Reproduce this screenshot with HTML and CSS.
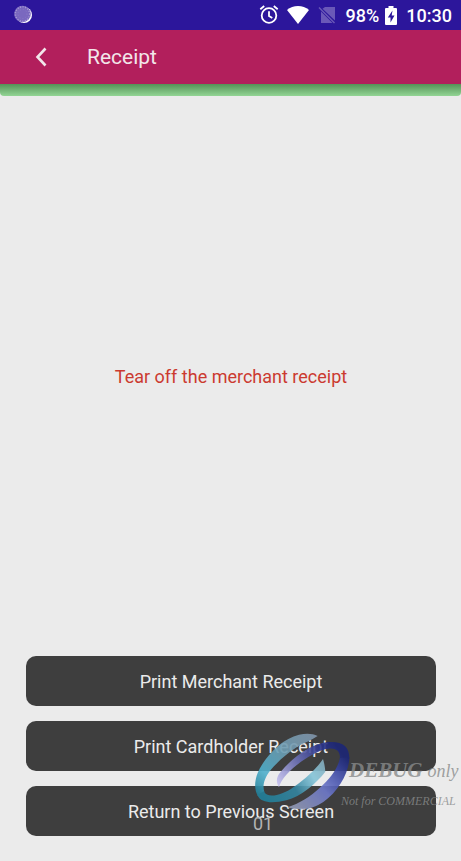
FILE: index.html
```
<!DOCTYPE html>
<html lang="en">
<head>
    <meta charset="UTF-8">
    <meta name="viewport" content="width=device-width, initial-scale=1.0">
    <title>Receipt</title>
    <link rel="stylesheet" href="styles.css">
</head>
<body>
    <div class="status-bar">
        <svg class="status-spinner" width="20" height="20" viewBox="0 0 20 20">
            <circle cx="10" cy="10" r="8" fill="#fff"/>
            <circle cx="8.5" cy="9" r="8.3" fill="#7a68bf"/>
            <circle cx="8.5" cy="9" r="7.2" fill="none" stroke="#a99cd6" stroke-width="1.5" stroke-dasharray="1 1.6"/>
            <circle cx="8.5" cy="9" r="4.5" fill="none" stroke="#8b7bc8" stroke-width="1" stroke-dasharray="1 2"/>
        </svg>
        <div class="status-icons">
            <svg width="20" height="20" viewBox="0 0 20 20" fill="none" stroke="#fff" stroke-width="1.8">
                <circle cx="10" cy="10.5" r="7.3"/>
                <path d="M10 6.3v4.7l3.3 2"/>
                <path d="M1.3 4.3l3.9-3.3M18.7 4.3l-3.9-3.3"/>
            </svg>
            <svg class="wifi" width="22" height="18" viewBox="0 0 22 18">
                <path d="M0 4C6-1.2 16-1.2 22 4L11 18z" fill="#fff"/>
            </svg>
            <svg class="no-sim" width="18" height="18" viewBox="0 0 18 18">
                <path d="M7 1h10v13.5L4.500 2.800zM3 5.500L14.500 17H3z" fill="#6a58b8"/>
                <path d="M1 1.500L16.500 17" stroke="#6a58b8" stroke-width="1.4"/>
            </svg>
            <span>98%</span>
            <svg class="battery" width="12" height="19" viewBox="0 0 12 19">
                <path d="M3.5 0h5v2H11q1 0 1 1v15q0 1-1 1H1q-1 0-1-1V3q0-1 1-1h2.5z" fill="#fff"/>
                <path d="M7.5 4.5L2.8 11.5h2.7V16.500L9.500 9.500H6.700z" fill="#2c169b"/>
            </svg>
            <span>10:30</span>
        </div>
    </div>

    <header class="toolbar">
        <button class="back" type="button" aria-label="Back">
            <svg width="12" height="20" viewBox="0 0 12 20">
                <path d="M10.500 1.500L2.500 10L10.500 18.500" fill="none" stroke="#f2e6ea" stroke-width="2.6"/>
            </svg>
        </button>
        <h1>Receipt</h1>
    </header>
    <div class="strip"></div>

    <main>
        <p class="message">Tear off the merchant receipt</p>
        <div class="actions">
            <button type="button">Print Merchant Receipt</button>
            <button type="button">Print Cardholder Receipt</button>
            <button type="button">Return to Previous Screen</button>
        </div>
    </main>

    <!-- debug build overlay -->
    <div class="watermark">
        <svg class="watermark-logo" width="110" height="85" viewBox="0 0 330 255">
            <defs>
                <linearGradient id="teal" gradientUnits="userSpaceOnUse" x1="195" y1="15" x2="25" y2="195">
                    <stop offset="0" stop-color="#8296ac"/>
                    <stop offset="0.4" stop-color="#6d9db3"/>
                    <stop offset="0.75" stop-color="#4fb0cc"/>
                    <stop offset="1" stop-color="#22809a"/>
                </linearGradient>
                <linearGradient id="tealTail" gradientUnits="userSpaceOnUse" x1="40" y1="205" x2="225" y2="95">
                    <stop offset="0" stop-color="#22809a"/>
                    <stop offset="0.45" stop-color="#3585a0"/>
                    <stop offset="0.75" stop-color="#84c4d8"/>
                    <stop offset="1" stop-color="#86adbd"/>
                </linearGradient>
                <linearGradient id="blue" gradientUnits="userSpaceOnUse" x1="80" y1="155" x2="255" y2="40">
                    <stop offset="0" stop-color="#c2bdec"/>
                    <stop offset="0.4" stop-color="#7074b8"/>
                    <stop offset="0.8" stop-color="#2a348c"/>
                    <stop offset="1" stop-color="#1c2676"/>
                </linearGradient>
                <linearGradient id="blueTail" gradientUnits="userSpaceOnUse" x1="290" y1="80" x2="135" y2="230">
                    <stop offset="0" stop-color="#1c2676"/>
                    <stop offset="0.25" stop-color="#3c48a4"/>
                    <stop offset="0.55" stop-color="#6f7acb"/>
                    <stop offset="1" stop-color="#9098b4"/>
                </linearGradient>
            </defs>
            <path d="M203 18C188 10 168 10 147 14C91 28 38 86 20 137C13 160 14 183 24 199L43 185C37 168 42 145 62 120C77 102 109 71 140 52C160 39 184 31 203 18z" fill="url(#teal)"/>
            <path d="M22 195C33 221 71 220 109 211C153 199 199 160 226 125C225 111 223 101 219 87C199 116 171 143 131 171C94 198 50 206 42 184z" fill="url(#tealTail)"/>
            <path d="M87 172C77 155 79 142 91 127C128 81 186 40 235 36C278 33 299 50 298 86L269 88C274 61 253 50 225 58C176 73 97 128 87 172z" fill="url(#blue)"/>
            <path d="M298 82C298 126 266 184 220 216C191 235 158 245 112 232C148 221 181 200 208 175C242 144 263 116 270 84z" fill="url(#blueTail)"/>
        </svg>
        <div class="watermark-text">
            <p class="debug"><b>DEBUG</b> only</p>
            <p class="notice">Not for COMMERCIAL</p>
        </div>
        <p class="counter">01</p>
    </div>
</body>
</html>
```
FILE: styles.css
```
* {
    box-sizing: border-box;
}
body {
    margin: 0;
    min-height: 100vh;
    display: flex;
    flex-direction: column;
    position: relative;
    overflow-x: hidden;
    background-color: #ebebeb;
    font-family: Roboto, Arial, sans-serif;
}
h1, p {
    margin: 0;
    font-weight: normal;
}
svg {
    display: block;
}

.status-bar {
    height: 30px;
    padding: 0 9px 0 14px;
    display: flex;
    align-items: center;
    justify-content: space-between;
    background-color: #2c169b;
    color: #fff;
    font-size: 18px;
    font-weight: 500;
}
.status-icons {
    display: flex;
    align-items: center;
}
.wifi {
    margin-left: 8px;
}
.no-sim {
    margin: 0 10px 0 9px;
}
.battery {
    margin: 0 9px 0 6px;
}

.toolbar {
    height: 54px;
    padding-left: 26px;
    display: flex;
    align-items: center;
    gap: 31px;
    background-color: #b21f5c;
    color: #f2e6ea;
}
.toolbar h1 {
    font-size: 21px;
}
.back {
    width: 30px;
    height: 40px;
    padding: 0;
    border: none;
    background: none;
    display: flex;
    align-items: center;
    justify-content: center;
}
.strip {
    height: 12px;
    border-radius: 0 0 4px 4px;
    background: linear-gradient(#559257, #92d594);
}

main {
    flex: 1;
    display: flex;
    flex-direction: column;
    padding: 0 25px 25px 26px;
}
.message {
    flex: 1;
    display: flex;
    align-items: center;
    justify-content: center;
    color: #cb3a30;
    font-size: 18px;
}
.actions {
    display: flex;
    flex-direction: column;
    gap: 15px;
}
.actions button {
    height: 50px;
    border: none;
    border-radius: 10px;
    background-color: #3e3e3e;
    color: #ebebeb;
    font-family: inherit;
    font-size: 18px;
}

.watermark {
    position: absolute;
    right: 0;
    bottom: 28px;
    width: 211px;
    display: grid;
    grid-template-columns: 91px 1fr;
    pointer-events: none;
}
.watermark-logo {
    opacity: 0.9;
}
.watermark-text {
    padding-top: 28px;
    font-family: "Liberation Serif", "Times New Roman", serif;
    font-style: italic;
    white-space: nowrap;
    color: rgba(136, 138, 138, 0.8);
}
.debug {
    padding-left: 8px;
    display: flex;
    align-items: baseline;
    gap: 5px;
    font-size: 18px;
    line-height: 24px;
}
.debug b {
    font-size: 21px;
}
.notice {
    margin-top: 8px;
    font-size: 12px;
    line-height: 20px;
}
.counter {
    padding-left: 3px;
    color: #b4b4b4;
    font-size: 18px;
    line-height: 18px;
}
```
